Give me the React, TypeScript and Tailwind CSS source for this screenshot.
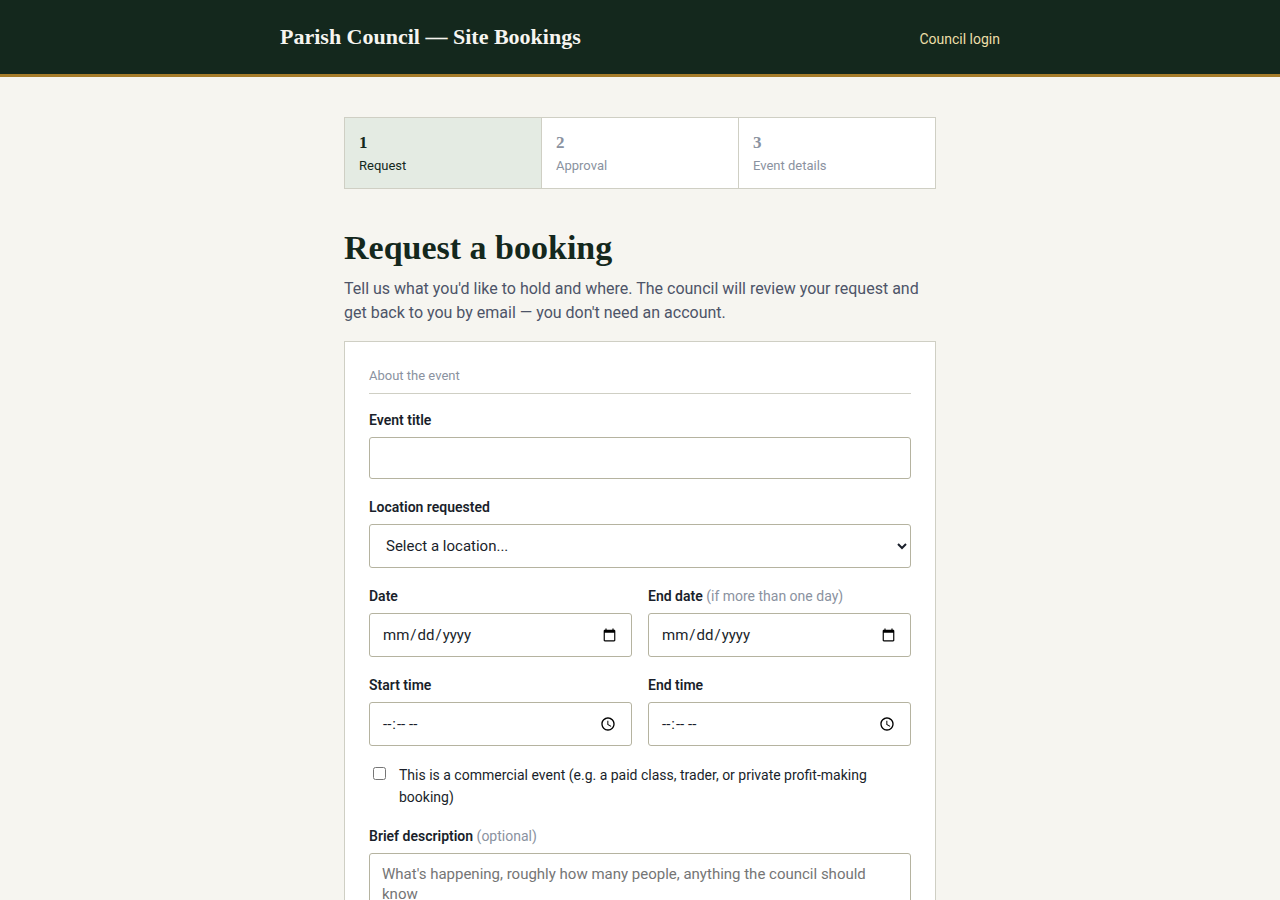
import { useState } from "react";
import type { ReactNode } from "react";

const steps = ["Request", "Approval", "Event details"];

const controlClass =
  "block w-full rounded-[3px] border border-[#b5b3a0] bg-white px-3 text-[15px] text-[#1a1f2b] focus:outline-2 focus:outline-[#14281d]";

interface FieldProps {
  id: string;
  label: string;
  hint?: string;
  children: ReactNode;
}

function Field({ id, label, hint, children }: FieldProps) {
  return (
    <div>
      <label
        htmlFor={id}
        className="mb-1.5 block text-[14px] leading-[21px] font-semibold text-[#1a1f2b]"
      >
        {label}
        {hint && <span className="font-normal text-[#8a92a0]"> {hint}</span>}
      </label>
      {children}
    </div>
  );
}

function Stepper({ current }: { current: number }) {
  return (
    <ol className="grid grid-cols-3 gap-px border border-[#cfcfc4] bg-[#cfcfc4]">
      {steps.map((step, i) => (
        <li
          key={step}
          className={
            i === current
              ? "bg-[#e4ebe3] px-3.5 py-3 text-[#14281d]"
              : "bg-white px-3.5 py-3 text-[#8a92a0]"
          }
        >
          <span className="block font-['Liberation_Serif',serif] text-[17px] leading-[25px] font-bold">
            {i + 1}
          </span>
          <span className="block text-[13px] leading-[21px]">{step}</span>
        </li>
      ))}
    </ol>
  );
}

export default function App() {
  const [form, setForm] = useState({
    title: "",
    location: "",
    date: "",
    endDate: "",
    startTime: "",
    endTime: "",
    commercial: false,
    description: "",
  });

  const update = (
    e: React.ChangeEvent<
      HTMLInputElement | HTMLSelectElement | HTMLTextAreaElement
    >
  ) => setForm({ ...form, [e.target.name]: e.target.value });

  return (
    <div className="min-h-screen bg-[#f6f5f0] font-['Roboto',sans-serif] text-[#1a1f2b]">
      <header className="border-b-3 border-[#a67c2a] bg-[#14281d] px-6 py-5">
        <div className="mx-auto flex max-w-[720px] items-center justify-between">
          <span className="font-['Liberation_Serif',serif] text-[22px] leading-[34px] font-bold text-[#f6f5f0]">
            Parish Council — Site Bookings
          </span>
          <a
            href="#login"
            className="pt-1 text-[14px] leading-5 text-[#ecdfa8] hover:underline"
          >
            Council login
          </a>
        </div>
      </header>

      <main className="mx-auto max-w-[640px] px-6 py-10">
        <Stepper current={0} />

        <h1 className="mt-10 font-['Liberation_Serif',serif] text-[34px] leading-[38px] font-bold text-[#14281d]">
          Request a booking
        </h1>
        <p className="mt-2.5 text-[16px] leading-6 text-[#4d5468]">
          Tell us what you'd like to hold and where. The council will review
          your request and get back to you by email — you don't need an account.
        </p>

        <form className="mt-4 border border-[#cfcfc4] bg-white p-6">
          <h2 className="border-b border-[#cfcfc4] pb-[7px] text-[13px] leading-5 text-[#8a92a0]">
            About the event
          </h2>

          <div className="mt-4 flex flex-col gap-[18px]">
            <Field id="title" label="Event title">
              <input
                id="title"
                name="title"
                type="text"
                value={form.title}
                onChange={update}
                className={`${controlClass} h-[42px]`}
              />
            </Field>

            <Field id="location" label="Location requested">
              <select
                id="location"
                name="location"
                value={form.location}
                onChange={update}
                className={`${controlClass} h-11`}
              >
                <option value="">Select a location...</option>
              </select>
            </Field>

            <div className="grid grid-cols-2 gap-4">
              <Field id="date" label="Date">
                <input
                  id="date"
                  name="date"
                  type="date"
                  value={form.date}
                  onChange={update}
                  className={`${controlClass} h-11`}
                />
              </Field>
              <Field
                id="endDate"
                label="End date"
                hint="(if more than one day)"
              >
                <input
                  id="endDate"
                  name="endDate"
                  type="date"
                  value={form.endDate}
                  onChange={update}
                  className={`${controlClass} h-11`}
                />
              </Field>
            </div>

            <div className="grid grid-cols-2 gap-4">
              <Field id="startTime" label="Start time">
                <input
                  id="startTime"
                  name="startTime"
                  type="time"
                  value={form.startTime}
                  onChange={update}
                  className={`${controlClass} h-11`}
                />
              </Field>
              <Field id="endTime" label="End time">
                <input
                  id="endTime"
                  name="endTime"
                  type="time"
                  value={form.endTime}
                  onChange={update}
                  className={`${controlClass} h-11`}
                />
              </Field>
            </div>

            <div className="flex items-start gap-[13px] pl-1">
              <input
                id="commercial"
                type="checkbox"
                checked={form.commercial}
                onChange={(e) =>
                  setForm({ ...form, commercial: e.target.checked })
                }
                className="mt-[3px] size-[13px] shrink-0"
              />
              <label
                htmlFor="commercial"
                className="text-[14px] leading-[22px]"
              >
                This is a commercial event (e.g. a paid class, trader, or
                private profit-making booking)
              </label>
            </div>

            <Field
              id="description"
              label="Brief description"
              hint="(optional)"
            >
              <textarea
                id="description"
                name="description"
                rows={5}
                value={form.description}
                onChange={update}
                placeholder="What's happening, roughly how many people, anything the council should know"
                className={`${controlClass} py-2.5 leading-5 placeholder:text-[#757575]`}
              />
            </Field>
          </div>
        </form>
      </main>
    </div>
  );
}
